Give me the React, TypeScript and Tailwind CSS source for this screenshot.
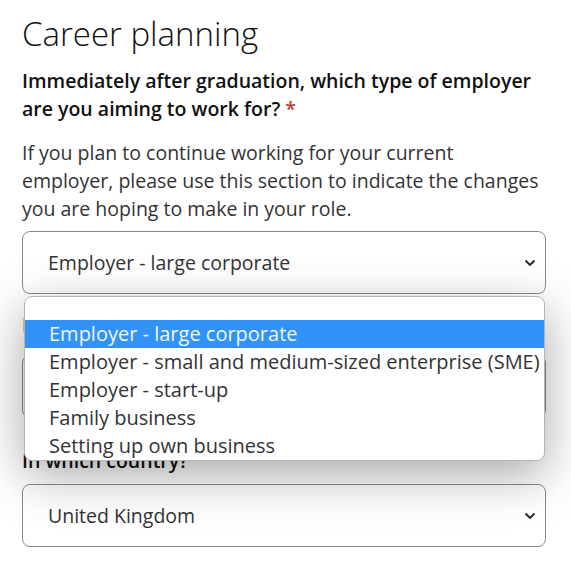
const options = [
  "Employer - large corporate",
  "Employer - small and medium-sized enterprise (SME)",
  "Employer - start-up",
  "Family business",
  "Setting up own business",
];

type SelectBoxProps = {
  value: string;
};

const SelectBox = ({ value }: SelectBoxProps) => (
  <div className="flex h-[63px] items-center justify-between rounded-lg border border-[#8a8a8a] bg-white pl-[25px] pr-[8px] text-[19.5px] text-[#333]">
    <span>{value}</span>
    <svg width="12" height="8" viewBox="0 0 12 8" fill="none" className="mr-[1px]">
      <polyline points="1.5,1.5 6,6 10.5,1.5" stroke="#222" strokeWidth="1.8" />
    </svg>
  </div>
);

export default function App() {
  return (
    <div
      className="relative h-[567px] w-[571px] overflow-hidden bg-white pl-[22px] pr-[25px] pt-[14px] text-[#111]"
      style={{ fontFamily: '"Open Sans", "Noto Sans", sans-serif' }}
    >
      <h1 className="text-[33px] font-light leading-[40px] text-[#111]">Career planning</h1>

      <p className="mt-[13px] text-[19.5px] font-semibold leading-[28px]">
        Immediately after graduation, which type of employer are you aiming to work for?{" "}
        <span className="text-[#c0392b]">*</span>
      </p>

      <p className="mt-[16px] text-[19.5px] leading-[28px] text-[#333]">
        If you plan to continue working for your current employer, please use this section to
        indicate the changes you are hoping to make in your role.
      </p>

      <div className="relative mt-[8px]">
        <SelectBox value="Employer - large corporate" />

        <div className="absolute left-[2px] right-[1px] top-[65px] z-10 overflow-hidden rounded-lg border border-[#b5b5b5] bg-white pt-[23px] shadow-[0_14px_50px_rgba(0,0,0,0.35)]">
          {options.map((option, i) => (
            <div
              key={option}
              className={
                i === 0
                  ? "h-[28px] whitespace-nowrap bg-[#3392f5] pl-[24px] text-[20px] leading-[28px] text-[#eef7ff]"
                  : "h-[28px] whitespace-nowrap pl-[24px] text-[20px] leading-[28px] text-[#333]"
              }
            >
              {option}
            </div>
          ))}
        </div>

        <p className="mt-[17px] text-[19.5px] font-semibold leading-[28px]">Please specify</p>
        <div className="mt-[16px]">
          <SelectBox value="" />
        </div>

        <p className="mt-[29px] text-[19.5px] font-semibold leading-[28px]">In which country?</p>
        <div className="mt-[9px]">
          <SelectBox value="United Kingdom" />
        </div>
      </div>
    </div>
  );
}
